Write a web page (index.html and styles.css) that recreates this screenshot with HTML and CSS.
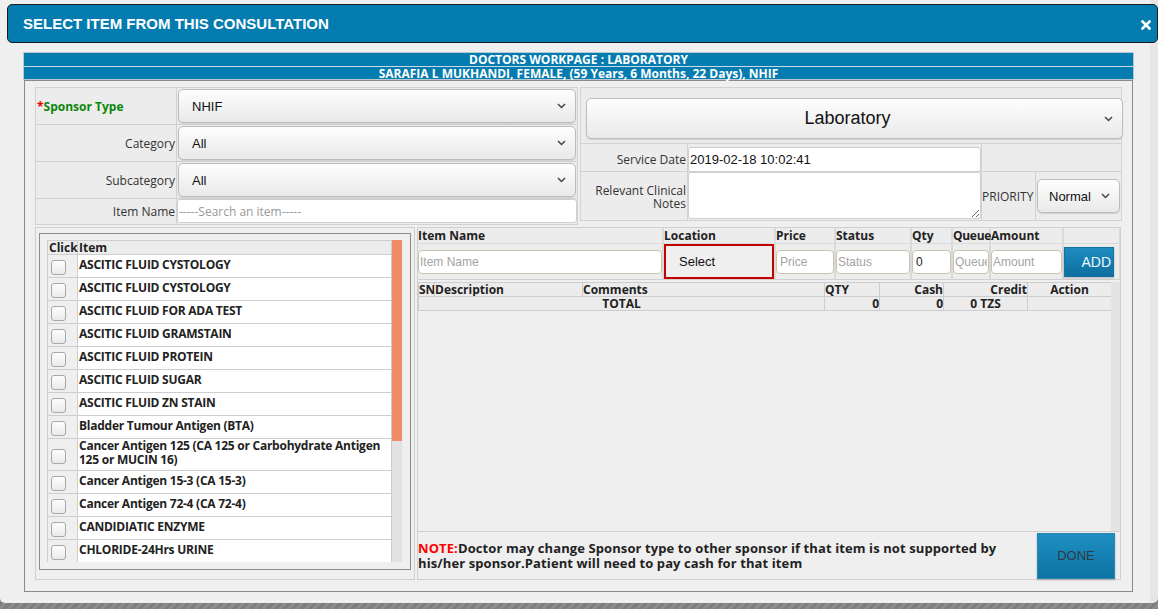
FILE: index.html
```html
<!DOCTYPE html>
<html>
<head>
<meta charset="utf-8">
<title>Select item from this consultation</title>
<link rel="stylesheet" href="styles.css">
</head>
<body>
<div class="dialog">
  <div class="titlebar">
    <h1>SELECT ITEM FROM THIS CONSULTATION</h1>
    <svg class="close" width="10" height="10" viewBox="0 0 10 10"><path d="M1.5 1.5 L8.5 8.5 M8.5 1.5 L1.5 8.5" stroke="#fff" stroke-width="2.6" stroke-linecap="square"/></svg>
  </div>
  <div class="dlg-body">
    <div class="band">
      <div class="band-row">DOCTORS WORKPAGE : LABORATORY</div>
      <div class="band-row second">SARAFIA L MUKHANDI, FEMALE, (59 Years, 6 Months, 22 Days), NHIF</div>
    </div>
    <div class="mainbox">
      <div class="top">
        <div class="form-left">
          <div class="cell lbl req"><span class="star">*</span>Sponsor Type</div>
          <div class="cell fld"><div class="select"><span>NHIF</span><svg width="9" height="6" viewBox="0 0 9 6"><path d="M1 1 L4.5 4.5 L8 1" fill="none" stroke="#444" stroke-width="1.5"/></svg></div></div>
          <div class="cell lbl">Category</div>
          <div class="cell fld"><div class="select"><span>All</span><svg width="9" height="6" viewBox="0 0 9 6"><path d="M1 1 L4.5 4.5 L8 1" fill="none" stroke="#444" stroke-width="1.5"/></svg></div></div>
          <div class="cell lbl">Subcategory</div>
          <div class="cell fld"><div class="select"><span>All</span><svg width="9" height="6" viewBox="0 0 9 6"><path d="M1 1 L4.5 4.5 L8 1" fill="none" stroke="#444" stroke-width="1.5"/></svg></div></div>
          <div class="cell lbl">Item Name</div>
          <div class="cell fld"><input class="search" type="text" placeholder="-----Search an item-----"></div>
        </div>
        <div class="form-right">
          <div class="cell span4"><div class="select big"><span>Laboratory</span><svg width="9" height="6" viewBox="0 0 9 6"><path d="M1 1 L4.5 4.5 L8 1" fill="none" stroke="#444" stroke-width="1.5"/></svg></div></div>
          <div class="cell lbl date-lbl">Service Date</div>
          <div class="cell fld"><input class="date" type="text" value="2019-02-18 10:02:41"></div>
          <div class="cell span2"></div>
          <div class="cell lbl notes-lbl">Relevant Clinical Notes</div>
          <div class="cell fld"><textarea class="notes"></textarea></div>
          <div class="cell prio">PRIORITY</div>
          <div class="cell fld"><div class="select small"><span>Normal</span><svg width="9" height="6" viewBox="0 0 9 6"><path d="M1 1 L4.5 4.5 L8 1" fill="none" stroke="#444" stroke-width="1.5"/></svg></div></div>
        </div>
      </div>
      <div class="bottom">
        <div class="list-panel">
          <div class="list-frame">
            <div class="list-scroll">
              <div class="list-body">
                <table class="items">
                  <thead><tr><th class="c-click">Click</th><th class="c-item">Item</th></tr></thead>
                  <tbody>
                    <tr><td class="c-click"><span class="cb"></span></td><td class="c-item">ASCITIC FLUID CYSTOLOGY</td></tr>
                    <tr><td class="c-click"><span class="cb"></span></td><td class="c-item">ASCITIC FLUID CYSTOLOGY</td></tr>
                    <tr><td class="c-click"><span class="cb"></span></td><td class="c-item">ASCITIC FLUID FOR ADA TEST</td></tr>
                    <tr><td class="c-click"><span class="cb"></span></td><td class="c-item">ASCITIC FLUID GRAMSTAIN</td></tr>
                    <tr><td class="c-click"><span class="cb"></span></td><td class="c-item">ASCITIC FLUID PROTEIN</td></tr>
                    <tr><td class="c-click"><span class="cb"></span></td><td class="c-item">ASCITIC FLUID SUGAR</td></tr>
                    <tr><td class="c-click"><span class="cb"></span></td><td class="c-item">ASCITIC FLUID ZN STAIN</td></tr>
                    <tr><td class="c-click"><span class="cb"></span></td><td class="c-item">Bladder Tumour Antigen (BTA)</td></tr>
                    <tr><td class="c-click"><span class="cb"></span></td><td class="c-item">Cancer Antigen 125 (CA 125 or Carbohydrate Antigen 125 or MUCIN 16)</td></tr>
                    <tr><td class="c-click"><span class="cb"></span></td><td class="c-item">Cancer Antigen 15-3 (CA 15-3)</td></tr>
                    <tr><td class="c-click"><span class="cb"></span></td><td class="c-item">Cancer Antigen 72-4 (CA 72-4)</td></tr>
                    <tr><td class="c-click"><span class="cb"></span></td><td class="c-item">CANDIDIATIC ENZYME</td></tr>
                    <tr><td class="c-click"><span class="cb"></span></td><td class="c-item">CHLORIDE-24Hrs URINE</td></tr>
                  </tbody>
                </table>
              </div>
              <div class="sbar"><div class="sthumb"></div></div>
            </div>
          </div>
        </div>
        <div class="work-panel">
          <div class="entry">
            <div class="eh">Item Name</div>
            <div class="eh">Location</div>
            <div class="eh">Price</div>
            <div class="eh">Status</div>
            <div class="eh">Qty</div>
            <div class="eh tight">Queue</div>
            <div class="eh">Amount</div>
            <div class="eh"></div>
            <div class="ec"><input class="inp" type="text" placeholder="Item Name"></div>
            <div class="ec"><div class="loc">Select</div></div>
            <div class="ec"><input class="inp pad" type="text" placeholder="Price"></div>
            <div class="ec"><input class="inp" type="text" placeholder="Status"></div>
            <div class="ec"><input class="inp pad" type="text" value="0"></div>
            <div class="ec"><input class="inp" type="text" placeholder="Queue"></div>
            <div class="ec"><input class="inp" type="text" placeholder="Amount"></div>
            <div class="ec"><button class="add" type="button">ADD</button></div>
          </div>
          <div class="cart">
            <div class="cart-main">
              <table class="cart-table">
                <colgroup><col style="width:16px"><col style="width:148px"><col style="width:242px"><col style="width:55px"><col style="width:64px"><col style="width:84px"><col style="width:84px"></colgroup>
                <thead>
                  <tr><th>SN</th><th>Description</th><th>Comments</th><th>QTY</th><th class="r">Cash</th><th class="r">Credit</th><th class="ctr">Action</th></tr>
                </thead>
                <tbody>
                  <tr><td colspan="3" class="ctr b">TOTAL</td><td class="r b">0</td><td class="r b">0</td><td class="ctr b">0 TZS</td><td></td></tr>
                </tbody>
              </table>
            </div>
            <div class="cart-track"></div>
          </div>
          <div class="note-row">
            <p class="note"><span class="red">NOTE:</span>Doctor may change Sponsor type to other sponsor if that item is not supported by his/her sponsor.Patient will need to pay cash for that item</p>
            <button class="done" type="button">DONE</button>
          </div>
        </div>
      </div>
    </div>
  </div>
</div>
</body>
</html>
```
FILE: styles.css
```css
* { box-sizing: border-box; }

body {
  margin: 0;
  width: 1158px;
  height: 609px;
  overflow: hidden;
  background: repeating-linear-gradient(135deg, #7e7e7e 0 3px, #8c8c8c 3px 6px);
  font-family: "Open Sans", "DejaVu Sans", sans-serif;
  font-size: 12px;
  color: #333;
}

.dialog {
  width: 1158px;
  height: 603px;
  background: linear-gradient(to right, #efefef 0 1150px, #e6e6e6 1150px);
  border-radius: 0 0 5px 5px;
  padding-top: 4px;
}

.titlebar {
  margin-left: 7px;
  width: 1151px;
  height: 39px;
  background: #047cb0;
  border: 1px solid #1b1b1b;
  border-radius: 5px;
  display: flex;
  align-items: center;
  justify-content: space-between;
  padding: 0 6px 0 15px;
}

.titlebar h1 {
  margin: 0;
  font: bold 15px "Liberation Sans", Arial, sans-serif;
  color: #fff;
}

.close { margin-top: 2px; }

.dlg-body {
  padding: 9px 0 0 23px;
}

.band {
  width: 1111px;
  background: #047cb0;
  border: 1px solid #b7c9d3;
  color: #fff;
  font-weight: bold;
  font-size: 12px;
  text-align: center;
}

.band-row {
  height: 13px;
  line-height: 13px;
}

.band-row.second {
  border-top: 1px solid #c4dbe7;
}

.mainbox {
  margin-left: 1px;
  width: 1109px;
  height: 512px;
  border: 1px solid #8a8a8a;
  padding: 6px 0 0 10px;
}

.top {
  display: flex;
  gap: 2px;
  align-items: flex-start;
}

.form-left {
  display: grid;
  grid-template-columns: 140px 400px;
  grid-template-rows: 36px 36px 36px 25px;
  gap: 1px;
  border: 1px solid #d2d2d2;
  background: #d2d2d2;
}

.form-right {
  display: grid;
  grid-template-columns: 106px 293px 53px 85px;
  grid-template-rows: 55px 27px 48px;
  gap: 1px;
  border: 1px solid #d2d2d2;
  background: #d2d2d2;
}

.cell {
  background: #ececec;
  min-width: 0;
}

.lbl {
  display: flex;
  align-items: center;
  justify-content: flex-end;
  text-align: right;
  padding-right: 1px;
  color: #333;
}

.lbl.req {
  justify-content: flex-start;
  padding-left: 1px;
  color: #0a860a;
  font-weight: bold;
}

.date-lbl { padding-top: 3px; }

.star { color: #e00; }

.fld {
  padding: 1px;
}

.span4 { grid-column: span 4; }
.span2 { grid-column: span 2; }

.select {
  display: flex;
  align-items: center;
  justify-content: space-between;
  height: 34px;
  border: 1px solid #bcbcbc;
  border-radius: 5px;
  background: linear-gradient(#fefefe, #e9e9e9);
  box-shadow: 0 1px 1px rgba(0, 0, 0, 0.12);
  padding: 0 9px 0 13px;
  font: 13px "Liberation Sans", Arial, sans-serif;
  color: #111;
}

.select.big {
  margin: 10px 0 0 5px;
  width: 537px;
  height: 41px;
  font-size: 18px;
  padding: 0 9px 0 4px;
}

.select.big span {
  flex: 1;
  text-align: center;
}

.select.small {
  margin-top: 6px;
  width: 83px;
  padding: 0 9px 0 11px;
  font-size: 13px;
}

.search {
  display: block;
  width: 400px;
  height: 24px;
  margin: -1px 0 0 -1px;
  border: 1px solid #cfcfcf;
  border-radius: 3px;
  background: #fff;
  padding: 0 0 0 1px;
  font: 12px "Open Sans", sans-serif;
  color: #333;
}

.search::placeholder { color: #999; }

.date {
  display: block;
  width: 293px;
  height: 25px;
  margin: 2px 0 0 -1px;
  border: 1px solid #cfcfcf;
  border-radius: 3px;
  background: #fff;
  padding: 0 1px;
  font: 13px "Liberation Sans", Arial, sans-serif;
  color: #111;
}

.notes {
  display: block;
  width: 293px;
  height: 47px;
  margin: -1px 0 0 -1px;
  border: 1px solid #cfcfcf;
  border-radius: 3px;
  background: #fff;
  resize: both;
}

.notes-lbl {
  line-height: 13px;
  padding-top: 1px;
}

.prio {
  display: flex;
  align-items: center;
  color: #333;
}

.bottom {
  display: flex;
  gap: 2px;
  margin-top: 2px;
}

.list-panel {
  width: 380px;
  height: 353px;
  border: 1px solid #d0d0d0;
  padding: 5px 3px 8px 3px;
}

.list-frame {
  border: 1px solid #8c8c8c;
  padding: 6px 8px 7px 7px;
}

.list-scroll {
  height: 322px;
  display: flex;
  overflow: hidden;
  background: #ececec;
}

.list-body {
  width: 345px;
}

.sbar {
  width: 10px;
  background: #e2e2e2;
}

.sthumb {
  height: 201px;
  background: #f08d66;
}

.items {
  width: 345px;
  border-collapse: collapse;
  table-layout: fixed;
}

.items th {
  font-weight: bold;
  text-align: left;
  line-height: 13px;
  padding: 0 0 0 1px;
  background: #ececec;
  border: 1px solid #cdcdcd;
  color: #222;
}

.items th.c-click { width: 30px; }

.items td {
  border: 1px solid #cdcdcd;
  vertical-align: middle;
}

.items td.c-click {
  background: #efefef;
  padding: 5px 0 2px 3px;
}

.items td.c-item {
  background: #fff;
  font-weight: bold;
  color: #222;
  line-height: 14px;
  letter-spacing: -0.25px;
  padding: 0 1px 3px 1px;
}

.cb {
  display: block;
  width: 15px;
  height: 15px;
  border: 1px solid #a8a8a8;
  border-radius: 3px;
  background: linear-gradient(#fdfdfd, #eaeaea);
}

.work-panel {
  width: 704px;
  height: 353px;
  border: 1px solid #d0d0d0;
  display: flex;
  flex-direction: column;
}

.entry {
  display: grid;
  grid-template-columns: 244px 110px 58px 74px 39px 36px 71px 55px;
  grid-template-rows: 15px 35px;
  gap: 1px 2px;
  background: #dadada;
  border-bottom: 1px solid #d0d0d0;
  width: 702px;
}

.eh {
  background: #ececec;
  font-weight: bold;
  color: #222;
  line-height: 15px;
  white-space: nowrap;
}

.eh.tight { letter-spacing: -0.3px; }

.ec {
  background: #ececec;
  display: flex;
  align-items: center;
}

.inp {
  display: block;
  width: 100%;
  height: 24px;
  border: 1px solid #c9c4b1;
  border-radius: 4px;
  background: #fff;
  padding: 0 1px;
  font: 12px "Liberation Sans", Arial, sans-serif;
  color: #222;
}

.inp.pad { padding-left: 3px; }
.inp::placeholder { color: #a3a3a3; }

.loc {
  width: 110px;
  height: 35px;
  border: 2px solid #c40000;
  background: #efefef;
  display: flex;
  align-items: center;
  padding-left: 13px;
  font: 13px "Liberation Sans", Arial, sans-serif;
  color: #111;
}

.add {
  width: 50px;
  height: 30px;
  border: 1px solid #1473a0;
  background: linear-gradient(#1f8cc0, #0c6f9f);
  color: #eef6fb;
  font: 14px "Liberation Sans", Arial, sans-serif;
  text-align: right;
  padding: 0 2px 0 0;
  box-shadow: 0 1px 2px rgba(0, 0, 0, 0.25);
}

.cart {
  flex: 1;
  display: flex;
  margin-top: 2px;
}

.cart-main {
  width: 693px;
}

.cart-track {
  width: 10px;
  background: #e3e3e3;
}

.cart-table {
  width: 693px;
  border-collapse: collapse;
  table-layout: fixed;
}

.cart-table th,
.cart-table td {
  border: 1px solid #cdcdcd;
  background: #ececec;
  line-height: 13px;
  padding: 0;
  color: #222;
  text-align: left;
  white-space: nowrap;
  overflow: hidden;
}

.cart-table th { font-weight: bold; }
.cart-table .r { text-align: right; }
.cart-table .ctr { text-align: center; }
.cart-table .b { font-weight: bold; }

.note-row {
  height: 48px;
  border-top: 1px solid #d0d0d0;
  display: flex;
  align-items: center;
}

.note {
  flex: 1;
  margin: 0;
  padding-right: 24px;
  font-weight: bold;
  font-size: 13px;
  line-height: 15px;
  letter-spacing: 0.1px;
  color: #222;
}

.red { color: #f00; }

.done {
  width: 78px;
  height: 46px;
  margin-right: 5px;
  border: 1px solid #2a86b4;
  background: linear-gradient(#1f8fc2, #0d73a4);
  color: #2f3a40;
  font: 13px "Liberation Sans", Arial, sans-serif;
  box-shadow: 0 1px 2px rgba(0, 0, 0, 0.25);
}
```
